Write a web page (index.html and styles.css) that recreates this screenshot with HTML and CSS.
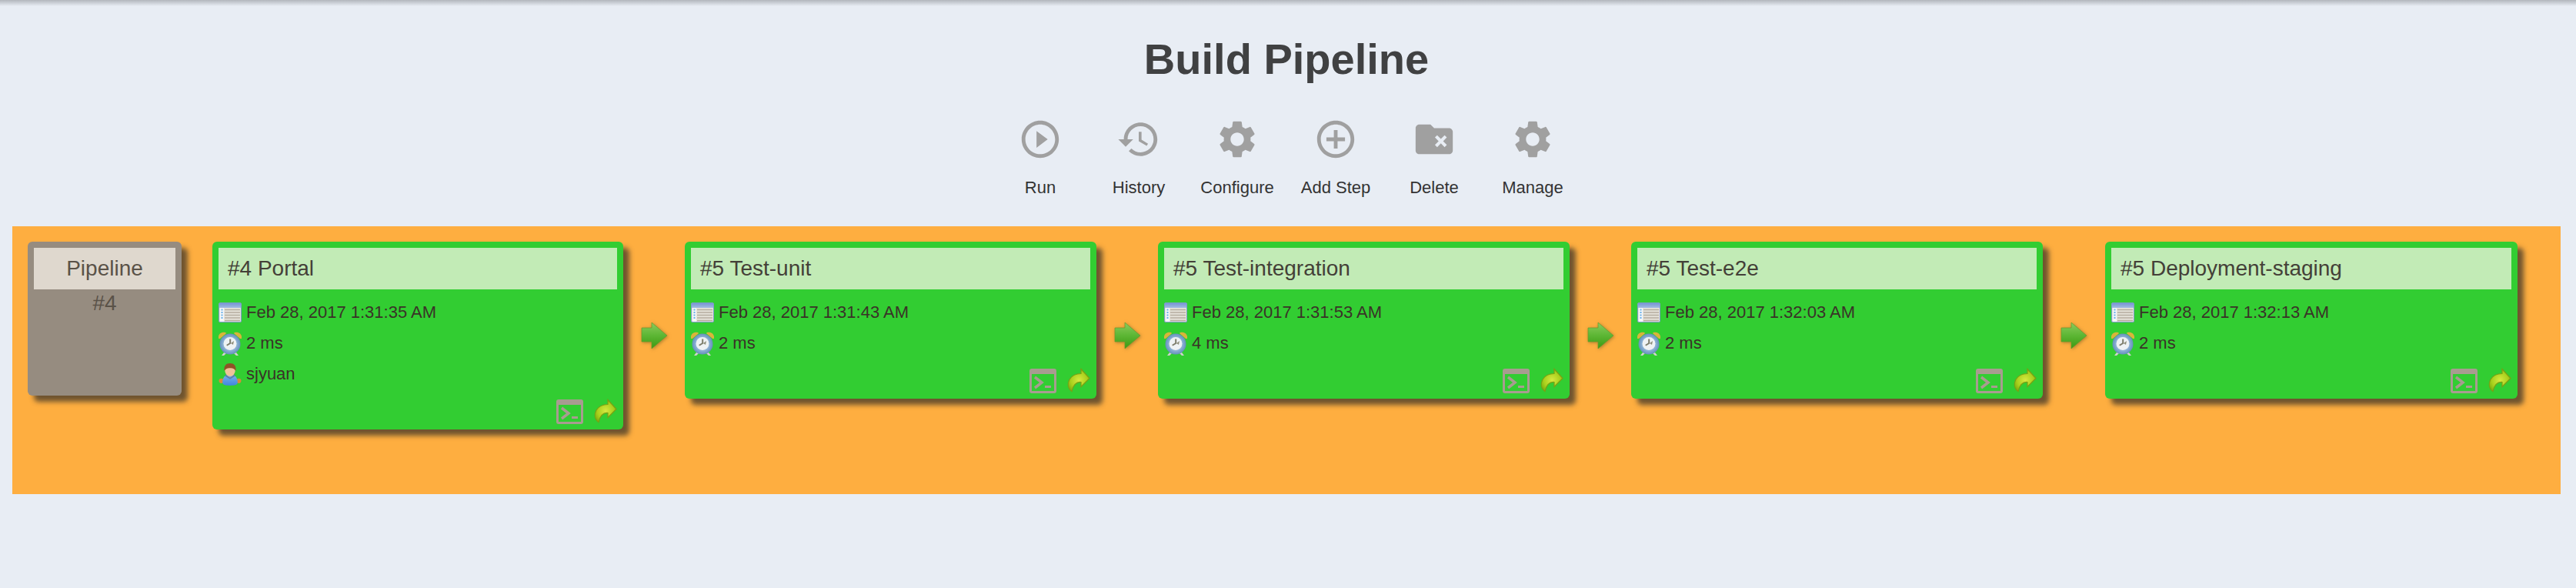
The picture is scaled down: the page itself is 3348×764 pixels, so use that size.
FILE: index.html
```html
<!DOCTYPE html>
<html lang="en">
<head>
<meta charset="utf-8">
<title>Build Pipeline</title>
<link rel="stylesheet" href="styles.css">
</head>
<body>
<svg class="sprites" width="0" height="0" aria-hidden="true">
  <defs>
    <linearGradient id="arrowFill" x1="0" y1="0" x2="0" y2="1"><stop offset="0" stop-color="#8ccb5e"/><stop offset="0.5" stop-color="#5cb634"/><stop offset="1" stop-color="#3c9a12"/></linearGradient>
    <linearGradient id="calHead" x1="0" y1="0" x2="0" y2="1"><stop offset="0" stop-color="#7896d4"/><stop offset="1" stop-color="#a3bbe2"/></linearGradient>
    <radialGradient id="clockBody"><stop offset="0.6" stop-color="#92b6d8"/><stop offset="1" stop-color="#6590bc"/></radialGradient>
    <radialGradient id="shareFill" cx="0.5" cy="0.5" r="0.55"><stop offset="0" stop-color="#d6e840"/><stop offset="0.7" stop-color="#a8d01c"/><stop offset="1" stop-color="#86b410"/></radialGradient>
    <linearGradient id="userBody" x1="0" y1="0" x2="0" y2="1"><stop offset="0" stop-color="#7ab4ee"/><stop offset="1" stop-color="#3f86dc"/></linearGradient>
    <symbol id="i-run" viewBox="0 0 24 24"><path d="M10 16.500l6-4.500-6-4.500v9zM12 2C6.480 2 2 6.480 2 12s4.480 10 10 10 10-4.480 10-10S17.520 2 12 2zm0 18c-4.410 0-8-3.590-8-8s3.590-8 8-8 8 3.590 8 8-3.590 8-8 8z"/></symbol>
    <symbol id="i-history" viewBox="0 0 24 24"><path d="M13 3c-4.970 0-9 4.030-9 9H1l3.890 3.890.07.14L9 12H6c0-3.870 3.130-7 7-7s7 3.130 7 7-3.130 7-7 7c-1.930 0-3.680-.79-4.940-2.060l-1.420 1.420C8.270 19.990 10.510 21 13 21c4.970 0 9-4.030 9-9s-4.030-9-9-9zm-1 5v5l4.280 2.540.72-1.210-3.500-2.080V8H12z"/></symbol>
    <symbol id="i-gear" viewBox="0 0 24 24"><path d="M19.14 12.94c.04-.3.06-.61.06-.94 0-.32-.02-.64-.07-.94l2.03-1.58c.18-.14.23-.41.12-.61l-1.92-3.32c-.12-.22-.37-.29-.59-.22l-2.39.96c-.5-.38-1.03-.7-1.62-.94l-.36-2.54c-.04-.24-.24-.41-.48-.41h-3.84c-.24 0-.43.17-.47.41l-.36 2.54c-.59.24-1.13.57-1.62.94l-2.39-.96c-.22-.08-.47 0-.59.22L2.74 8.87c-.12.21-.08.47.12.61l2.03 1.58c-.05.3-.09.63-.09.94s.02.64.07.94l-2.03 1.58c-.18.14-.23.41-.12.61l1.92 3.32c.12.22.37.29.59.22l2.39-.96c.5.38 1.03.7 1.62.94l.36 2.54c.05.24.24.41.48.41h3.84c.24 0 .44-.17.47-.41l.36-2.54c.59-.24 1.13-.56 1.62-.94l2.39.96c.22.08.47 0 .59-.22l1.92-3.32c.12-.22.07-.47-.12-.61l-2.01-1.58zM12 15.600c-1.980 0-3.600-1.620-3.600-3.600s1.620-3.600 3.600-3.600 3.600 1.620 3.600 3.600-1.620 3.600-3.600 3.600z"/></symbol>
    <symbol id="i-add" viewBox="0 0 24 24"><path d="M13 7h-2v4H7v2h4v4h2v-4h4v-2h-4V7zm-1-5C6.480 2 2 6.480 2 12s4.480 10 10 10 10-4.480 10-10S17.520 2 12 2zm0 18c-4.410 0-8-3.590-8-8s3.590-8 8-8 8 3.590 8 8-3.590 8-8 8z"/></symbol>
    <symbol id="i-delete" viewBox="0 0 24 24"><path d="M10 4H4c-1.100 0-1.990.9-1.990 2L2 18c0 1.100.9 2 2 2h16c1.100 0 2-.9 2-2V8c0-1.100-.9-2-2-2h-8l-2-2z"/><path d="M13.600 9.800l2 2 2-2 1.200 1.200-2 2 2 2-1.200 1.200-2-2-2 2-1.200-1.200 2-2-2-2z" fill="#e8edf4"/></symbol>
    <symbol id="i-cal" viewBox="0 0 30 26">
      <rect x="0.500" y="0.500" width="29" height="25" rx="1.500" fill="#e6e3da" stroke="#7d9cc8"/>
      <rect x="1" y="1" width="28" height="6" fill="url(#calHead)"/>
      <rect x="2" y="7" width="5" height="18" fill="#f4f6f8"/>
      <path d="M8 9.500h20M8 13h20M8 16.500h20M8 20h20M8 23.500h20" stroke="#b5ada0" stroke-width="1.500"/>
      <path d="M3.500 9.500h2M3.500 13h2M3.500 16.500h2M3.500 20h2" stroke="#6cb2e8" stroke-width="1.800"/>
    </symbol>
    <symbol id="i-clock" viewBox="0 0 30 31">
      <path d="M7 27l-3 4h3l3-3zM23 27l3 4h-3l-3-3z" fill="#cfd2ce"/>
      <circle cx="15" cy="16" r="13.500" fill="url(#clockBody)"/>
      <circle cx="15" cy="15.500" r="8.500" fill="#eef2f4"/>
      <path d="M0 9C-1 3 4 0 9 1c1 0 1 1 0 2L2 9zM30 9c1-6-4-9-9-8-1 0-1 1 0 2l7 6z" fill="#d9b43a"/>
      <path d="M14.200 9.500h2v6l-5 3-1-1.500 4-2.500z" fill="#7d7d6c"/>
      <path d="M16 15l4-3-1 5z" fill="#8f8f7c"/>
    </symbol>
    <symbol id="i-user" viewBox="0 0 29 28">
      <circle cx="3.500" cy="22" r="3" fill="#d78a3c"/>
      <circle cx="25.500" cy="22" r="3" fill="#d78a3c"/>
      <path d="M5 24c0-6 3.500-10 9.500-10S24 18 24 24c0 3-3 4-9.500 4S5 27 5 24z" fill="url(#userBody)"/>
      <path d="M9 14l5.500 4 5.500-4 1 2-6.500 4L8 16z" fill="#5f7fa8"/>
      <ellipse cx="14.500" cy="9" rx="6.500" ry="7.500" fill="#efc29a"/>
      <path d="M7.500 10C6 3 10 0 14.500 0S23 3 21.500 10c-1-3-3-4-7-4s-6 1-7 4z" fill="#8f5226"/>
    </symbol>
    <symbol id="i-next" viewBox="0 0 35 36">
      <path d="M1 8h13V1l20 17-20 17v-9H1z" fill="url(#arrowFill)" stroke="#6a9a2c" stroke-opacity=".7"/>
    </symbol>
    <symbol id="i-console" viewBox="0 0 35 32">
      <path fill-rule="evenodd" d="M3 0h29a3 3 0 0 1 3 3v26a3 3 0 0 1-3 3H3a3 3 0 0 1-3-3V3a3 3 0 0 1 3-3zM3 7v22h29V7z"/>
      <path d="M7 11l9 7-9 7" fill="none" stroke="currentColor" stroke-width="3.500"/>
      <path d="M20 22h8v3h-8z"/>
    </symbol>
    <symbol id="i-share" viewBox="0 0 30 32">
      <path d="M18 1.500L29 13.500 18 24.500V18.500C12 18 8 22 6 30.500 1 27 0 21 3 15 6 10 12 7.500 18 7.500z" fill="url(#shareFill)" stroke="#7a9f14" stroke-width="1.200"/>
    </symbol>
  </defs>
</svg>

<h1 class="title">Build Pipeline</h1>

<nav class="toolbar">
  <a class="tool"><svg class="tool-icon"><use href="#i-run"/></svg><span>Run</span></a>
  <a class="tool"><svg class="tool-icon"><use href="#i-history"/></svg><span>History</span></a>
  <a class="tool"><svg class="tool-icon"><use href="#i-gear"/></svg><span>Configure</span></a>
  <a class="tool"><svg class="tool-icon"><use href="#i-add"/></svg><span>Add Step</span></a>
  <a class="tool"><svg class="tool-icon"><use href="#i-delete"/></svg><span>Delete</span></a>
  <a class="tool"><svg class="tool-icon"><use href="#i-gear"/></svg><span>Manage</span></a>
</nav>

<section class="band">
  <div class="start">
    <div class="start-head">Pipeline</div>
    <div class="start-num">#4</div>
  </div>

  <article class="job job-first">
    <div class="job-head">#4 Portal</div>
    <div class="row"><svg class="ic ic-cal"><use href="#i-cal"/></svg>Feb 28, 2017 1:31:35 AM</div>
    <div class="row"><svg class="ic"><use href="#i-clock"/></svg>2 ms</div>
    <div class="row"><svg class="ic"><use href="#i-user"/></svg>sjyuan</div>
    <div class="actions"><svg class="console"><use href="#i-console"/></svg><svg class="share"><use href="#i-share"/></svg></div>
  </article>
  <svg class="next"><use href="#i-next"/></svg>

  <article class="job">
    <div class="job-head">#5 Test-unit</div>
    <div class="row"><svg class="ic ic-cal"><use href="#i-cal"/></svg>Feb 28, 2017 1:31:43 AM</div>
    <div class="row"><svg class="ic"><use href="#i-clock"/></svg>2 ms</div>
    <div class="actions"><svg class="console"><use href="#i-console"/></svg><svg class="share"><use href="#i-share"/></svg></div>
  </article>
  <svg class="next"><use href="#i-next"/></svg>

  <article class="job">
    <div class="job-head">#5 Test-integration</div>
    <div class="row"><svg class="ic ic-cal"><use href="#i-cal"/></svg>Feb 28, 2017 1:31:53 AM</div>
    <div class="row"><svg class="ic"><use href="#i-clock"/></svg>4 ms</div>
    <div class="actions"><svg class="console"><use href="#i-console"/></svg><svg class="share"><use href="#i-share"/></svg></div>
  </article>
  <svg class="next"><use href="#i-next"/></svg>

  <article class="job">
    <div class="job-head">#5 Test-e2e</div>
    <div class="row"><svg class="ic ic-cal"><use href="#i-cal"/></svg>Feb 28, 2017 1:32:03 AM</div>
    <div class="row"><svg class="ic"><use href="#i-clock"/></svg>2 ms</div>
    <div class="actions"><svg class="console"><use href="#i-console"/></svg><svg class="share"><use href="#i-share"/></svg></div>
  </article>
  <svg class="next"><use href="#i-next"/></svg>

  <article class="job job-last">
    <div class="job-head">#5 Deployment-staging</div>
    <div class="row"><svg class="ic ic-cal"><use href="#i-cal"/></svg>Feb 28, 2017 1:32:13 AM</div>
    <div class="row"><svg class="ic"><use href="#i-clock"/></svg>2 ms</div>
    <div class="actions"><svg class="console"><use href="#i-console"/></svg><svg class="share"><use href="#i-share"/></svg></div>
  </article>
</section>
</body>
</html>
```
FILE: styles.css
```css
* { box-sizing: border-box; }
html, body { height: 100%; }
body {
  margin: 0;
  padding: 0 20px 0 16px;
  background: #e8edf4;
  font-family: "Liberation Sans", Arial, sans-serif;
  color: #333;
  overflow: hidden;
}
body::before {
  content: "";
  display: block;
  height: 8px;
  margin: 0 -20px 0 -16px;
  background: linear-gradient(#b2b6bc, #e8edf4);
}
.sprites { display: block; height: 0; }
.title {
  margin: 0;
  padding-top: 37px;
  height: 144px;
  text-align: center;
  font-size: 56px;
  line-height: 64px;
  font-weight: 700;
  color: #404142;
}
.toolbar {
  display: flex;
  justify-content: center;
  height: 142px;
}
.tool {
  width: 128px;
  display: flex;
  flex-direction: column;
  align-items: center;
  font-size: 22px;
  line-height: 26px;
  color: #333;
}
.tool-icon {
  width: 58px;
  height: 58px;
  fill: #a0a0a0;
  margin-bottom: 21px;
}
.band {
  display: flex;
  align-items: flex-start;
  height: 348px;
  padding: 20px;
  background: #feae40;
}
.start, .job {
  border-radius: 6px;
  padding: 8px;
  box-shadow: 8px 8px 6px rgba(50, 45, 40, 0.7);
}
.start {
  width: 200px;
  height: 200px;
  margin-right: 40px;
  background: #968c80;
  color: #5a5248;
  text-align: center;
  font-size: 28px;
}
.start-head {
  height: 54px;
  line-height: 54px;
  background: #dfd8ce;
}
.start-num { line-height: 36px; }
.job {
  width: 535px;
  height: 204px;
  background: #32cd32;
  display: flex;
  flex-direction: column;
}
.job-first { width: 534px; height: 244px; }
.job-last { width: 536px; margin-left: 1px; }
.job-head {
  height: 54px;
  line-height: 54px;
  padding-left: 12px;
  margin-bottom: 10px;
  background: #c2ebb6;
  color: #444038;
  font-size: 28px;
}
.row {
  display: flex;
  align-items: center;
  height: 40px;
  font-size: 22px;
  color: #3a3228;
  gap: 6px;
}
.ic { width: 30px; height: 31px; flex: none; filter: blur(0.4px); }
.ic-cal { height: 26px; }
.actions {
  margin-top: auto;
  margin-bottom: -1px;
  display: flex;
  align-items: center;
  justify-content: flex-end;
  gap: 14px;
}
.console { width: 35px; height: 32px; fill: #a89c90; color: #a89c90; }
.share { width: 30px; height: 32px; margin-top: -2px; filter: blur(0.4px); }
.next {
  width: 35px;
  height: 36px;
  flex: none;
  margin: 104px 22px 0 23px;
  filter: blur(0.5px) drop-shadow(1px 1px 2px rgba(90, 80, 30, 0.5));
}
```
